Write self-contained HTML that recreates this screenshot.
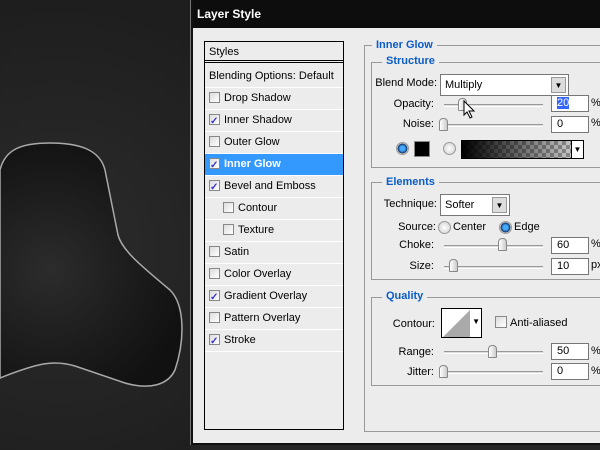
<!DOCTYPE html>
<html><head><style>
*{margin:0;padding:0;box-sizing:border-box}
body{width:600px;height:450px;overflow:hidden;background:#252525;font-family:"Liberation Sans",Arial,sans-serif;font-size:11px;color:#000;position:relative}
.a{position:absolute}
#dlg{left:190px;top:0;width:410px;height:445px;background:#111;border-left:1px solid #777}
#title{left:193px;top:0;width:407px;height:28px;background:#0d0d0d}
#title span{position:absolute;left:4px;top:7px;color:#fff;font-weight:bold;font-size:12px}
#body{left:193px;top:28px;width:407px;height:415px;background:#ececec}
#list{left:204px;top:41px;width:140px;height:389px;border:1px solid #000;background:#ececec}
.row{position:absolute;left:0;width:138px;height:22px;border-bottom:1px solid #fff;line-height:21px;padding-left:4px;white-space:nowrap}
.cb{display:inline-block;width:11px;height:11px;border:1px solid #888;background:linear-gradient(135deg,#ddd,#fff);vertical-align:-2px;margin-right:4px;position:relative}
.cb.c::after{content:"✓";position:absolute;left:0;top:-4px;font-size:10px;color:#33c;font-weight:bold}
.sel{background:#3399ff;color:#fff;font-weight:bold}
.grp{position:absolute;border:1px solid #999}
.lg{position:absolute;background:#ececec;color:#0a5cc8;font-weight:bold;padding:0 4px;font-size:11px}
.lbl{position:absolute;white-space:nowrap}
.r{position:absolute;white-space:nowrap;text-align:right}
.inp{position:absolute;background:#fff;border:1px solid #777;height:17px;padding-left:5px;line-height:15px}
.sl{position:absolute;height:3px;border-top:1px solid #999;border-bottom:1px solid #fff;background:#ddd}
.th{position:absolute;width:9px;height:13px;border:1px solid #888;border-radius:4px 4px 1px 1px;background:linear-gradient(90deg,#fff,#ccc)}
.dd{position:absolute;background:#fff;border:1px solid #777;height:22px;line-height:20px;padding-left:4px}
.btn{position:absolute;right:2px;top:2px;width:15px;height:16px;background:#ddd;border:1px solid #999;font-size:8px;text-align:center;line-height:15px}
.rad{position:absolute;width:13px;height:13px;border-radius:50%;border:1px solid #999;background:radial-gradient(#fff,#ccc)}
.rad.on{background:radial-gradient(#4af 30%,#136 60%,#ccc 65%)}
</style></head><body>
<svg class="a" style="left:0;top:0" width="190" height="450">
<defs><radialGradient id="g" cx="50" cy="270" r="140" gradientUnits="userSpaceOnUse"><stop offset="0" stop-color="#2c2c2c"/><stop offset="1" stop-color="#111"/></radialGradient>
<radialGradient id="bg" cx="60" cy="250" r="250" gradientUnits="userSpaceOnUse"><stop offset="0" stop-color="#2c2c2c"/><stop offset="1" stop-color="#1e1e1e"/></radialGradient></defs>
<rect width="190" height="450" fill="url(#bg)"/>
<path d="M0,170 C5,150 20,143 50,143 C80,143 100,150 105,170 L118,235 C122,250 140,265 170,290 C185,305 185,340 175,370 C168,385 150,390 125,383 L75,366 C55,360 40,362 0,378 Z" fill="url(#g)" stroke="#aaa" stroke-width="1.5"/>
</svg>
<div id="dlg" class="a"></div>
<div id="title" class="a"><span>Layer Style</span></div>
<div id="body" class="a"></div>
<div id="list" class="a">
<div class="row" style="top:0;height:21px;border-bottom:3px double #000">Styles</div>
<div class="row" style="top:24px">Blending Options: Default</div>
<div class="row" style="top:46px"><span class="cb"></span>Drop Shadow</div>
<div class="row" style="top:68px"><span class="cb c"></span>Inner Shadow</div>
<div class="row" style="top:90px"><span class="cb"></span>Outer Glow</div>
<div class="row sel" style="top:112px"><span class="cb c"></span>Inner Glow</div>
<div class="row" style="top:134px"><span class="cb c"></span>Bevel and Emboss</div>
<div class="row" style="top:156px;padding-left:18px"><span class="cb"></span>Contour</div>
<div class="row" style="top:178px;padding-left:18px"><span class="cb"></span>Texture</div>
<div class="row" style="top:200px"><span class="cb"></span>Satin</div>
<div class="row" style="top:222px"><span class="cb"></span>Color Overlay</div>
<div class="row" style="top:244px"><span class="cb c"></span>Gradient Overlay</div>
<div class="row" style="top:266px"><span class="cb"></span>Pattern Overlay</div>
<div class="row" style="top:288px"><span class="cb c"></span>Stroke</div>
</div>

<div class="grp" style="left:364px;top:45px;width:250px;height:387px"></div>
<div class="lg" style="left:372px;top:39px">Inner Glow</div>

<div class="grp" style="left:371px;top:62px;width:240px;height:106px"></div>
<div class="lg" style="left:382px;top:55px">Structure</div>
<div class="r" style="right:163px;top:77px">Blend Mode:</div>
<div class="dd" style="left:440px;top:74px;width:129px">Multiply<div class="btn">▼</div></div>
<div class="r" style="right:166px;top:98px">Opacity:</div>
<div class="sl" style="left:444px;top:104px;width:99px"></div>
<div class="th" style="left:458px;top:98px"></div>
<div class="inp" style="left:551px;top:95px;width:38px"><span style="background:#36f;color:#fff">20</span></div>
<div class="lbl" style="left:591px;top:97px">%</div>
<svg class="a" style="left:463px;top:100px" width="14" height="20"><path d="M1,1 L1,15 L4,12 L7,18 L9,17 L6,11 L11,11 Z" fill="#fff" stroke="#000"/></svg>
<div class="r" style="right:166px;top:118px">Noise:</div>
<div class="sl" style="left:444px;top:124px;width:99px"></div>
<div class="th" style="left:439px;top:118px"></div>
<div class="inp" style="left:551px;top:116px;width:38px">0</div>
<div class="lbl" style="left:591px;top:117px">%</div>
<div class="rad on" style="left:396px;top:142px"></div>
<div class="a" style="left:414px;top:141px;width:16px;height:16px;background:#000;border:1px solid #888"></div>
<div class="rad" style="left:443px;top:142px"></div>
<div class="a" style="left:461px;top:140px;width:123px;height:19px;border:1px solid #000;background:linear-gradient(90deg,#000,rgba(0,0,0,0)),repeating-conic-gradient(#999 0 25%,#ddd 0 50%) 0 0/8px 8px"></div>
<div class="a" style="left:571px;top:141px;width:12px;height:17px;background:#fff;border-left:1px solid #000;font-size:8px;text-align:center;line-height:17px">▼</div>

<div class="grp" style="left:371px;top:182px;width:240px;height:98px"></div>
<div class="lg" style="left:382px;top:176px">Elements</div>
<div class="r" style="right:163px;top:198px">Technique:</div>
<div class="dd" style="left:440px;top:194px;width:70px">Softer<div class="btn">▼</div></div>
<div class="r" style="right:164px;top:221px">Source:</div>
<div class="rad" style="left:438px;top:221px"></div>
<div class="lbl" style="left:453px;top:221px">Center</div>
<div class="rad on" style="left:499px;top:221px"></div>
<div class="lbl" style="left:514px;top:221px">Edge</div>
<div class="r" style="right:166px;top:239px">Choke:</div>
<div class="sl" style="left:444px;top:245px;width:99px"></div>
<div class="th" style="left:498px;top:238px"></div>
<div class="inp" style="left:551px;top:237px;width:38px">60</div>
<div class="lbl" style="left:591px;top:238px">%</div>
<div class="r" style="right:166px;top:260px">Size:</div>
<div class="sl" style="left:444px;top:266px;width:99px"></div>
<div class="th" style="left:449px;top:259px"></div>
<div class="inp" style="left:551px;top:258px;width:38px">10</div>
<div class="lbl" style="left:591px;top:259px">px</div>

<div class="grp" style="left:371px;top:297px;width:240px;height:89px"></div>
<div class="lg" style="left:382px;top:290px">Quality</div>
<div class="r" style="right:165px;top:318px">Contour:</div>
<div class="a" style="left:441px;top:308px;width:41px;height:30px;border:1px solid #000;background:#fff"><svg width="28" height="28"><path d="M1,28 L28,1 L28,28 Z" fill="#aaa"/></svg><span style="position:absolute;right:1px;top:8px;font-size:8px">▼</span></div>
<div class="cb" style="position:absolute;left:495px;top:316px;width:12px;height:12px"></div>
<div class="lbl" style="left:510px;top:317px">Anti-aliased</div>
<div class="r" style="right:166px;top:346px">Range:</div>
<div class="sl" style="left:444px;top:351px;width:99px"></div>
<div class="th" style="left:488px;top:345px"></div>
<div class="inp" style="left:551px;top:343px;width:38px">50</div>
<div class="lbl" style="left:591px;top:345px">%</div>
<div class="r" style="right:166px;top:366px">Jitter:</div>
<div class="sl" style="left:444px;top:371px;width:99px"></div>
<div class="th" style="left:439px;top:365px"></div>
<div class="inp" style="left:551px;top:363px;width:38px">0</div>
<div class="lbl" style="left:591px;top:365px">%</div>
</body></html>
